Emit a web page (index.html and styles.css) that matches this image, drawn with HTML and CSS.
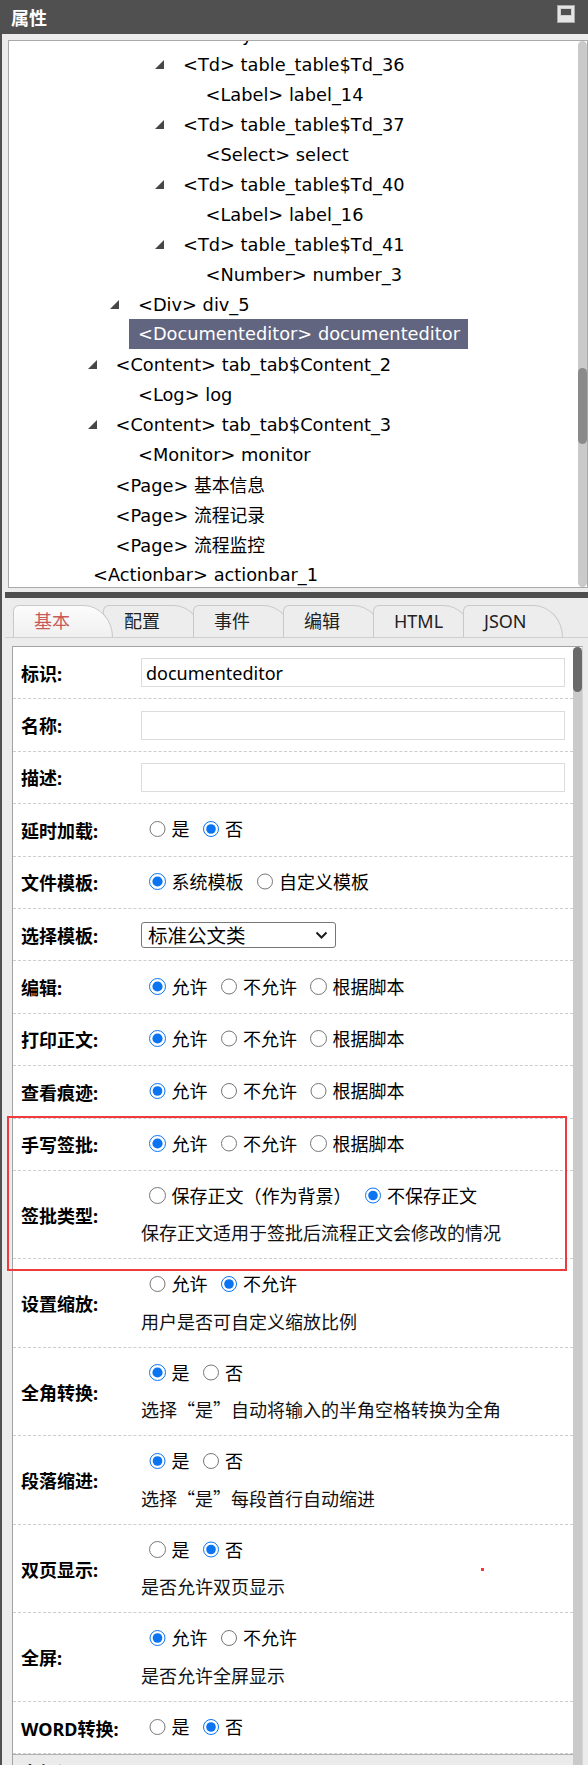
FILE: index.html
```html
<!DOCTYPE html>
<html lang="zh-CN">
  <head>
    <meta charset="UTF-8" />
    <meta name="viewport" content="width=device-width, initial-scale=1.0" />
    <title>属性</title>
    <link rel="stylesheet" href="styles.css">
  </head>
  <body>
    <div class="panel">
      <div class="panel-head">
        <span class="panel-title">属性</span>
        <span class="btn-max"><i></i></span>
      </div>
      <div class="panel-body">
        <div class="tree-box">
          <ul class="tree">
            <li class="lv5"><b class="tog"></b><span>&lt;Key&gt; KEY</span></li>
            <li class="lv4"><b class="tog"><svg width="9" height="9"><polygon points="9,0 9,9 0,9"/></svg></b><span>&lt;Td&gt; table_table$Td_36</span></li>
            <li class="lv5"><b class="tog"></b><span>&lt;Label&gt; label_14</span></li>
            <li class="lv4"><b class="tog"><svg width="9" height="9"><polygon points="9,0 9,9 0,9"/></svg></b><span>&lt;Td&gt; table_table$Td_37</span></li>
            <li class="lv5"><b class="tog"></b><span>&lt;Select&gt; select</span></li>
            <li class="lv4"><b class="tog"><svg width="9" height="9"><polygon points="9,0 9,9 0,9"/></svg></b><span>&lt;Td&gt; table_table$Td_40</span></li>
            <li class="lv5"><b class="tog"></b><span>&lt;Label&gt; label_16</span></li>
            <li class="lv4"><b class="tog"><svg width="9" height="9"><polygon points="9,0 9,9 0,9"/></svg></b><span>&lt;Td&gt; table_table$Td_41</span></li>
            <li class="lv5"><b class="tog"></b><span>&lt;Number&gt; number_3</span></li>
            <li class="lv2"><b class="tog"><svg width="9" height="9"><polygon points="9,0 9,9 0,9"/></svg></b><span>&lt;Div&gt; div_5</span></li>
            <li class="lv2"><b class="tog"></b><span class="cur">&lt;Documenteditor&gt; documenteditor</span></li>
            <li class="lv1"><b class="tog"><svg width="9" height="9"><polygon points="9,0 9,9 0,9"/></svg></b><span>&lt;Content&gt; tab_tab$Content_2</span></li>
            <li class="lv2"><b class="tog"></b><span>&lt;Log&gt; log</span></li>
            <li class="lv1"><b class="tog"><svg width="9" height="9"><polygon points="9,0 9,9 0,9"/></svg></b><span>&lt;Content&gt; tab_tab$Content_3</span></li>
            <li class="lv2"><b class="tog"></b><span>&lt;Monitor&gt; monitor</span></li>
            <li class="lv1"><b class="tog"></b><span>&lt;Page&gt; 基本信息</span></li>
            <li class="lv1"><b class="tog"></b><span>&lt;Page&gt; 流程记录</span></li>
            <li class="lv1"><b class="tog"></b><span>&lt;Page&gt; 流程监控</span></li>
            <li class="lv0"><b class="tog"></b><span>&lt;Actionbar&gt; actionbar_1</span></li>
          </ul>
          <div class="scroll tree-scroll"><div class="thumb"></div></div>
        </div>

        <div class="splitter"></div>

        <ul class="tabs">
          <li class="on"><span>基本</span></li>
          <li><span>配置</span></li>
          <li><span>事件</span></li>
          <li><span>编辑</span></li>
          <li><span>HTML</span></li>
          <li><span>JSON</span></li>
        </ul>

        <div class="form-box">
          <div class="props">
            <div class="row">
              <div class="lbl">标识:</div>
              <div class="val"><input class="txt" type="text" value="documenteditor"></div>
            </div>
            <div class="row">
              <div class="lbl">名称:</div>
              <div class="val"><input class="txt" type="text" value=""></div>
            </div>
            <div class="row">
              <div class="lbl">描述:</div>
              <div class="val"><input class="txt" type="text" value=""></div>
            </div>
            <div class="row">
              <div class="lbl">延时加载:</div>
              <div class="val"><label><input type="radio" name="lazy">是</label><label><input type="radio" name="lazy" checked>否</label></div>
            </div>
            <div class="row">
              <div class="lbl">文件模板:</div>
              <div class="val"><label><input type="radio" name="tpl" checked>系统模板</label><label><input type="radio" name="tpl">自定义模板</label></div>
            </div>
            <div class="row">
              <div class="lbl">选择模板:</div>
              <div class="val">
                <span class="sel-wrap">
                  <select class="sel">
                    <option>标准公文类</option>
                    <option>通用文档类</option>
                  </select>
                  <svg width="13" height="8" viewBox="0 0 13 8"><polyline points="1.5,1.5 6.5,6.5 11.5,1.5"/></svg>
                </span>
              </div>
            </div>
            <div class="row">
              <div class="lbl">编辑:</div>
              <div class="val"><label><input type="radio" name="edit" checked>允许</label><label><input type="radio" name="edit">不允许</label><label><input type="radio" name="edit">根据脚本</label></div>
            </div>
            <div class="row">
              <div class="lbl">打印正文:</div>
              <div class="val"><label><input type="radio" name="print" checked>允许</label><label><input type="radio" name="print">不允许</label><label><input type="radio" name="print">根据脚本</label></div>
            </div>
            <div class="row">
              <div class="lbl">查看痕迹:</div>
              <div class="val"><label><input type="radio" name="trace" checked>允许</label><label><input type="radio" name="trace">不允许</label><label><input type="radio" name="trace">根据脚本</label></div>
            </div>
            <div class="mark-group">
              <div class="row">
                <div class="lbl">手写签批:</div>
                <div class="val"><label><input type="radio" name="sign" checked>允许</label><label><input type="radio" name="sign">不允许</label><label><input type="radio" name="sign">根据脚本</label></div>
              </div>
              <div class="row">
                <div class="lbl">签批类型:</div>
                <div class="val two">
                  <label><input type="radio" name="signtype">保存正文（作为背景）</label><label><input type="radio" name="signtype" checked>不保存正文</label>
                  <p class="desc">保存正文适用于签批后流程正文会修改的情况</p>
                </div>
              </div>
              <div class="mark"></div>
            </div>
            <div class="row">
              <div class="lbl">设置缩放:</div>
              <div class="val two">
                <label><input type="radio" name="zoom">允许</label><label><input type="radio" name="zoom" checked>不允许</label>
                <p class="desc">用户是否可自定义缩放比例</p>
              </div>
            </div>
            <div class="row">
              <div class="lbl">全角转换:</div>
              <div class="val two">
                <label><input type="radio" name="full" checked>是</label><label><input type="radio" name="full">否</label>
                <p class="desc">选择“是”自动将输入的半角空格转换为全角</p>
              </div>
            </div>
            <div class="row">
              <div class="lbl">段落缩进:</div>
              <div class="val two">
                <label><input type="radio" name="indent" checked>是</label><label><input type="radio" name="indent">否</label>
                <p class="desc">选择“是”每段首行自动缩进</p>
              </div>
            </div>
            <div class="row has-dot">
              <div class="lbl">双页显示:</div>
              <div class="val two">
                <label><input type="radio" name="dual">是</label><label><input type="radio" name="dual" checked>否</label>
                <p class="desc">是否允许双页显示</p>
              </div>
              <span class="dot"></span>
            </div>
            <div class="row">
              <div class="lbl">全屏:</div>
              <div class="val two">
                <label><input type="radio" name="screen" checked>允许</label><label><input type="radio" name="screen">不允许</label>
                <p class="desc">是否允许全屏显示</p>
              </div>
            </div>
            <div class="row">
              <div class="lbl">WORD转换:</div>
              <div class="val"><label><input type="radio" name="word">是</label><label><input type="radio" name="word" checked>否</label></div>
            </div>
            <div class="group-head">高级设置</div>
          </div>
          <div class="scroll form-scroll"><div class="thumb"></div></div>
        </div>
      </div>
    </div>
  </body>
</html>
```

FILE: styles.css
```css
* {
  margin: 0;
  padding: 0;
  box-sizing: border-box;
}
body {
  width: 588px;
  height: 1765px;
  overflow: hidden;
  background: #ececec;
  font-family: "Noto Sans", "Noto Sans CJK SC", sans-serif;
  color: #000;
}
ul {
  list-style: none;
}

/* head */
.panel-head {
  height: 34px;
  background: #505050;
  display: flex;
  align-items: center;
  justify-content: space-between;
  padding: 0 13px 0 11px;
}
.panel-title {
  color: #fff;
  font-size: 18px;
  font-weight: bold;
  font-family: "Noto Sans CJK SC", sans-serif;
}
.btn-max {
  width: 18px;
  height: 18px;
  margin-top: -6px;
  padding: 2px;
  background: #e4e4e4;
  border: 1px solid #a8a8a8;
}
.btn-max i {
  display: block;
  height: 8px;
  background: #505050;
  border: 1px solid #cfcfcf;
}

.panel-body {
  min-height: 1731px;
  padding: 6px 0 0 3px;
  border-left: 2px solid #505050;
}

/* tree */
.tree-box {
  display: flex;
  height: 548px;
  margin-left: 3px;
  background: #fff;
  border: 1px solid #a9a9a9;
  overflow: hidden;
}
.tree {
  flex: 1;
  align-self: flex-start;
  margin-top: -22px;
  font-family: "DejaVu Sans", "Noto Sans CJK SC", sans-serif;
  font-size: 17.8px;
  white-space: nowrap;
}
.tree li {
  display: flex;
  align-items: center;
  height: 30px;
}
.tree .tog {
  flex: none;
  width: 28px;
  display: flex;
  align-items: center;
}
.tree .tog svg {
  fill: #474747;
}
.tree .lv0 { padding-left: 56px; }
.tree .lv1 { padding-left: 78.5px; }
.tree .lv2 { padding-left: 101px; }
.tree .lv3 { padding-left: 123.5px; }
.tree .lv4 { padding-left: 146px; }
.tree .lv5 { padding-left: 168.5px; }
.tree .cur {
  margin-left: -9px;
  padding: 0 8px 0 9px;
  line-height: 30px;
  background: #61657f;
  color: #fff;
}

.scroll {
  flex: none;
  width: 9px;
  background: #cacaca;
}
.scroll .thumb {
  border-radius: 5px;
}
.tree-scroll {
  border-radius: 5px;
}
.tree-scroll .thumb {
  height: 76px;
  margin-top: 327px;
  background: #8a8a8a;
}

.splitter {
  height: 6px;
  margin-top: 4px;
  background: #4e4e4e;
}

/* tabs */
.tabs {
  display: flex;
  height: 40px;
  padding: 7px 0 0 8px;
  border-bottom: 1px solid #cfcfcf;
}
.tabs li {
  position: relative;
  flex: none;
  width: 100px;
  height: 32px;
  margin-right: -10px;
  padding-left: 20px;
  border: 1px solid #c9c9c9;
  border-bottom: 0;
  border-radius: 6px 30px 0 0 / 6px 32px 0 0;
  background: #ededed;
  font-size: 18px;
  line-height: 30px;
  color: #222;
}
.tabs li.on {
  z-index: 1;
  background: linear-gradient(#fcfcfc, #f0f0f0);
  color: #c95a5a;
}

/* form */
.form-box {
  display: flex;
  width: 571px;
  margin: 8px 0 0 7px;
  background: #fff;
  border: 1px solid #a3a3a3;
  border-right-color: #d6d6d6;
}
.props {
  flex: 1;
}
.row {
  display: grid;
  grid-template-columns: 128px 1fr;
  align-items: center;
  min-height: 52.4px;
  border-bottom: 1px dashed #cdcdcd;
}
.lbl {
  padding-left: 8px;
  font-size: 18px;
  font-weight: bold;
}
.val {
  padding: 11px 8px 11px 0;
  font-size: 18px;
  line-height: 25px;
}
.val.two {
  padding: 13px 8px 13px 0;
}
.val label {
  margin-right: 5px;
}
.val input[type="radio"] {
  width: 16.5px;
  height: 16.5px;
  margin: 0 6px 0 8px;
  vertical-align: -1px;
  accent-color: #0b74f1;
}
.desc {
  margin-top: 11.5px;
  font-family: "Noto Sans CJK SC", sans-serif;
  color: #111;
}
.txt {
  display: block;
  width: 100%;
  height: 29px;
  padding: 0 4px;
  border: 1px solid #dcdcdc;
  font-family: "Noto Sans", "Noto Sans CJK SC", sans-serif;
  font-size: 18px;
  color: #000;
  outline: none;
}
.sel-wrap {
  display: inline-flex;
  align-items: center;
  width: 195px;
  height: 26px;
  border: 1px solid #767676;
  border-radius: 3px;
  background: #fff;
  vertical-align: middle;
}
.sel {
  flex: 1;
  min-width: 0;
  height: 24px;
  padding-left: 6px;
  border: 0;
  background: transparent;
  appearance: none;
  font-family: "Noto Sans CJK SC", sans-serif;
  font-size: 19.5px;
  line-height: 24px;
  color: #000;
  outline: none;
}
.sel-wrap svg {
  flex: none;
  margin-right: 7px;
  fill: none;
  stroke: #1c1c1c;
  stroke-width: 2;
}

.mark-group {
  position: relative;
}
.mark {
  position: absolute;
  top: -3px;
  bottom: -12px;
  left: -6px;
  right: 6px;
  border: 2px solid #ef3b3b;
  pointer-events: none;
}
.has-dot {
  position: relative;
}
.dot {
  position: absolute;
  left: 468px;
  top: 43px;
  width: 3px;
  height: 3px;
  background: #f33;
}

.group-head {
  height: 40px;
  padding: 4px 0 0 8px;
  border-top: 1px solid #b0b0b0;
  background: #ebebeb;
  font-size: 18px;
  font-weight: bold;
}

.form-scroll {
  border-radius: 5px 5px 0 0;
}
.form-scroll .thumb {
  height: 45px;
  background: #6a6a6a;
}
```
